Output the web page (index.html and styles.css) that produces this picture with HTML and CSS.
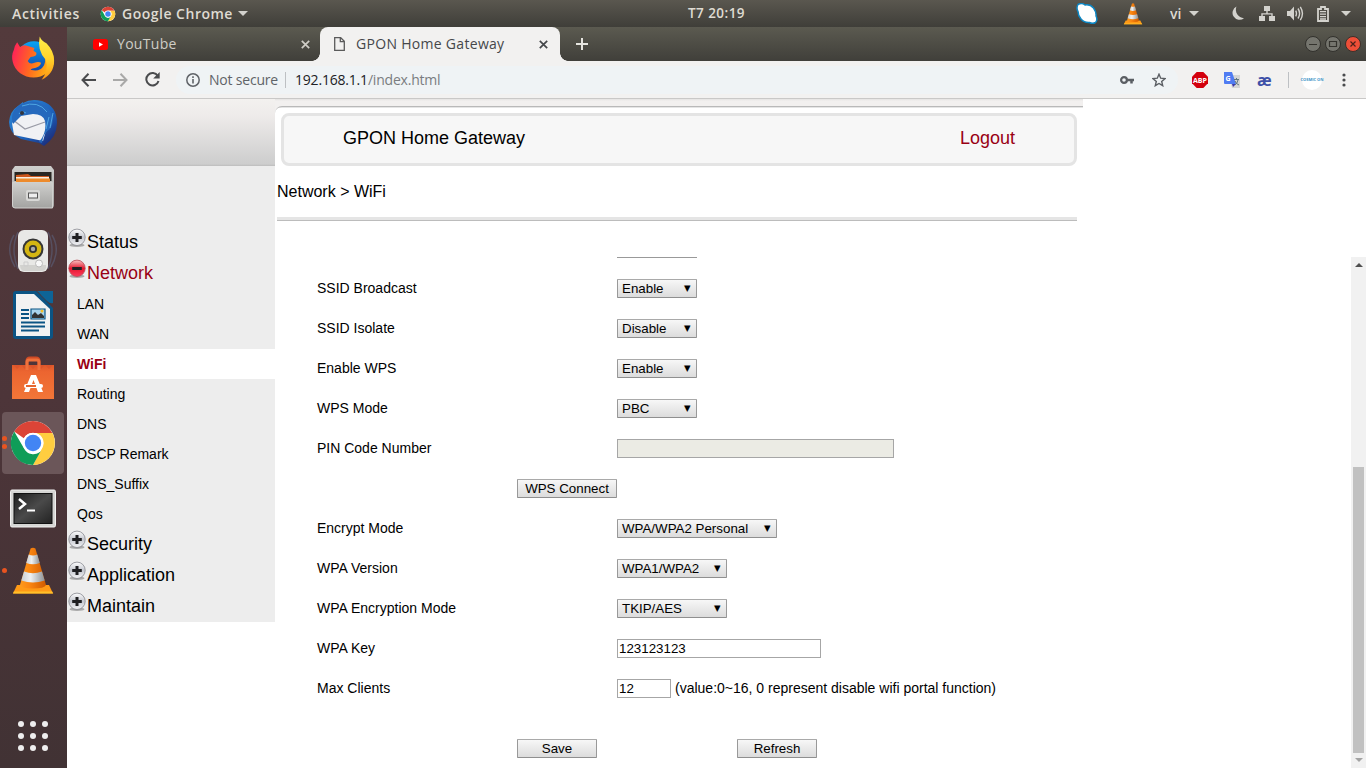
FILE: index.html
```html
<!DOCTYPE html>
<html lang="en">
<head>
<meta charset="utf-8">
<title>GPON Home Gateway</title>
<link rel="stylesheet" href="styles.css">
</head>
<body>
<svg width="0" height="0" class="defs">
  <defs>
    <linearGradient id="silver" x1="0" y1="0" x2="0" y2="1"><stop offset="0" stop-color="#fff"/><stop offset=".5" stop-color="#c3c6ce"/><stop offset="1" stop-color="#f4f4f6"/></linearGradient>
    <linearGradient id="red" x1="0" y1="0" x2="0" y2="1"><stop offset="0" stop-color="#f9c4c4"/><stop offset=".5" stop-color="#e2192f"/><stop offset="1" stop-color="#ff3b5d"/></linearGradient>
    <linearGradient id="fox" x1="0" y1=".2" x2="1" y2=".4"><stop offset="0" stop-color="#ff1f5b"/><stop offset=".5" stop-color="#ff6a1f"/><stop offset="1" stop-color="#ffbd12"/></linearGradient>
    <linearGradient id="flame" x1="0" y1="0" x2="0" y2="1"><stop offset="0" stop-color="#fff04a"/><stop offset=".5" stop-color="#ffd42c"/><stop offset="1" stop-color="#ff9412"/></linearGradient>
    <linearGradient id="globe" x1="0" y1="0" x2="0" y2="1"><stop offset="0" stop-color="#0aa4f5"/><stop offset="1" stop-color="#14389e"/></linearGradient>
    <linearGradient id="bird" x1="0" y1="0" x2="1" y2="1"><stop offset="0" stop-color="#2e8fdc"/><stop offset=".6" stop-color="#1d5fb8"/><stop offset="1" stop-color="#1b1c66"/></linearGradient>
    <linearGradient id="metal" x1="0" y1="0" x2="0" y2="1"><stop offset="0" stop-color="#cfcfcd"/><stop offset="1" stop-color="#a3a3a1"/></linearGradient>
    <linearGradient id="bag" x1="0" y1="0" x2="0" y2="1"><stop offset="0" stop-color="#e0592b"/><stop offset=".2" stop-color="#ec6530"/><stop offset="1" stop-color="#f27638"/></linearGradient>
    <linearGradient id="screen" x1="0" y1="0" x2="1" y2="1"><stop offset="0" stop-color="#1e1e1e"/><stop offset=".5" stop-color="#4a4a4a"/><stop offset="1" stop-color="#222"/></linearGradient>
    <linearGradient id="cone" x1="0" y1="0" x2="1" y2="0"><stop offset="0" stop-color="#ff9a1c"/><stop offset=".4" stop-color="#f98410"/><stop offset="1" stop-color="#cf5a00"/></linearGradient>
    <linearGradient id="stripe" x1="0" y1="0" x2="1" y2="0"><stop offset="0" stop-color="#c9ced2"/><stop offset=".4" stop-color="#eef0f1"/><stop offset="1" stop-color="#8d9296"/></linearGradient>
    <symbol id="chrome" viewBox="0 0 48 48">
      <circle cx="24" cy="24" r="22" fill="#fff"/>
      <path d="M24 2a22 22 0 0 1 19.400 12L24 14a10.500 10.500 0 0 0-9.200 5.300L5.200 12.600A22 22 0 0 1 24 2Z" fill="#db4437"/>
      <path d="M43.400 14A22 22 0 0 1 24 46l9-16.400A10.500 10.500 0 0 0 27 14Z" fill="#ffcd40"/>
      <path d="M5.200 12.400l9.700 16.900a10.500 10.500 0 0 0 16.800 3L24 46A22 22 0 0 1 5.200 12.400Z" fill="#0f9d58"/>
      <circle cx="24" cy="24" r="10.300" fill="#fff"/><circle cx="24" cy="24" r="8.200" fill="#4285f4"/>
    </symbol>
    <symbol id="vlc" viewBox="0 0 48 48">
      <path d="M8 38h32l4 8.500H4Z" fill="#ff9a16"/><path d="M4.800 44.500h38.400l1 2H4Z" fill="#ffc02a"/>
      <path d="M21.600 1.500q2.400-1.500 4.800 0L37 38q-1.500 3.500-13 3.500T11 38Z" fill="url(#cone)"/>
      <path d="M19.700 7.500q4.300 1.800 8.600 0l2.500 8.500q-6.800 2.500-13.600 0Z" fill="url(#stripe)"/>
      <path d="M15 24.500q9 3.500 18 0l2.700 9q-11.700 4-23.400 0Z" fill="url(#stripe)"/>
    </symbol>
    <symbol id="plus" viewBox="0 0 18 19"><ellipse cx="9" cy="17.300" rx="7.500" ry="1.700" fill="#aaa"/><circle cx="9" cy="9.300" r="8.200" fill="url(#silver)" stroke="#85878e" stroke-width=".8"/><path d="M7.500 5h3v3h3.300v3h-3.300v3h-3v-3H4.200V8h3.300Z" fill="#1f1f22"/></symbol>
    <symbol id="minus" viewBox="0 0 18 19"><ellipse cx="9" cy="17.300" rx="7.500" ry="1.700" fill="#aaa"/><circle cx="9" cy="9.300" r="8.200" fill="url(#red)" stroke="#b84a55" stroke-width=".8"/><path d="M4.200 8h9.600v3H4.200Z" fill="#1f1f22"/></symbol>
    <symbol id="close" viewBox="0 0 9 9"><path d="M.8.800l7.400 7.400M8.200.800L.8 8.200" stroke="currentColor" stroke-width="1.700"/></symbol>
  </defs>
</svg>

<header class="panel">
  <div class="panel-left">
    <span class="activities">Activities</span>
    <svg class="panel-chrome" width="16" height="16"><use href="#chrome"/></svg>
    <span class="app-name">Google Chrome</span>
    <i class="caret"></i>
  </div>
  <span class="clock">T7 20:19</span>
  <div class="panel-right">
    <svg width="22" height="22" viewBox="0 0 22 22"><path d="M2 1.500Q6-.5 9 2q5-1 8.500 3 3 4 2.500 8 2 4-.5 6.500-3 1.500-6 0-5 .5-8.500-3.500-3-3.500-3-7.500Q0 5 2 1.500Z" fill="#fff" stroke="#0d87c4" stroke-width="1.500"/></svg>
    <svg class="tray-vlc" width="22" height="22"><use href="#vlc"/></svg>
    <span class="lang">vi</span><i class="caret"></i>
    <svg class="moon" width="14" height="15" viewBox="0 0 14 15"><path d="M5.500.500A8.500 8.500 0 0 0 13 12.200 7 7 0 1 1 5.500.500Z" fill="#d3d2cd"/></svg>
    <svg class="net" width="16" height="15" viewBox="0 0 16 15" fill="#d3d2cd"><path d="M5 0h6v5H8.700v2.200h5V10H16v5h-6v-5h2.300V8.600H3.700V10H6v5H0v-5h2.300V7.200h5V5H5Z"/></svg>
    <svg class="sound" width="17" height="15" viewBox="0 0 17 15"><path d="M0 5h3l4-4.500v14L3 10H0Z" fill="#d3d2cd"/><path d="M8.700 4.700q1.500 2.800 0 5.600M11 2.500q3.200 5 0 10M13.300.800q4.300 6.700 0 13.400" fill="none" stroke="#d3d2cd" stroke-width="1.400"/></svg>
    <svg class="battery" width="12" height="16" viewBox="0 0 12 16"><path d="M4 1h4v2h3v12H1V3h3Z" fill="none" stroke="#d3d2cd" stroke-width="1.800"/><path d="M3 5.700h6M3 8.200h6M3 10.700h6M3 13h6" stroke="#d3d2cd" stroke-width="1.300"/></svg>
    <i class="caret"></i>
  </div>
</header>

<div class="desktop">
  <nav class="dock">
    <div class="tile"><svg width="48" height="48" viewBox="-1 -1.500 50 50"><circle cx="25" cy="23" r="18" fill="url(#globe)"/><path d="M4 14q1-5 3.500-8l3 5q4-3 8-1l7 2-1 3 3 2q1 4-6 4.500l-3 4q2 4 7 2 4-2 7 0-1 5-9 6-3 1-1 1.500 9 2 13-5 3-7-1-15V8Q46 16 46 27A22 20 0 0 1 3 27Q1 20 4 14Z" fill="url(#fox)"/><path d="M31 0q2 5 7 7 8 8 8 18 0 14-13 20 8-10 4-21Q28 14 31 0Z" fill="url(#flame)"/></svg></div>
    <div class="tile"><svg width="48" height="48" viewBox="0 0 48 48"><path d="M14 4q8-5 19-2 15 5 15 22 0 14-13 23l-5-3-18-4Q0 34 0 23 1 12 9 7l5-4Z" fill="url(#bird)"/><path d="M3 24l11-9 22-1q3 2 4 7l-6 21L5 36Z" fill="#f0f1f4"/><path d="M4 21l12 9 20-7" fill="none" stroke="#999ba6" stroke-width="1.300"/><path d="M12 5Q28-2 40 10q7 11 1 20-7 4-8 14l-3-1q8-9 6-21-2-7-12-7l-12 2-8 8Q0 12 12 5Z" fill="#2569bd"/><path d="M13 7q16-6 25 6M40 18l-3 12m7-16-3 15M10 15q2-4 7-1" fill="none" stroke="#4fa6e2"/><circle cx="13" cy="14" r="2" fill="#31343d"/></svg></div>
    <div class="tile"><svg width="48" height="48" viewBox="0 0 48 48"><path d="M6 3h36l3 4v35q0 3-3 3H6q-3 0-3-3V7Z" fill="url(#metal)"/><path d="M5.500 9h37v9h-37Z" fill="#292622"/><path d="M7 12l12-1 3 2h18v8H7Z" fill="#cc561c"/><path d="M7 14h33v4H7Z" fill="#f7eee3"/><path d="M7 15.500h34V20H7Z" fill="#ed8b2d"/><path d="M3.500 19.500h40V45H6q-2.500 0-2.500-3Z" fill="url(#metal)" stroke="#d0d0ce"/><rect x="17" y="27" width="14" height="11" rx="2" fill="#d8d8d6"/><rect x="19.500" y="30" width="9" height="5" fill="#eee" stroke="#555"/></svg></div>
    <div class="tile"><svg width="48" height="48" viewBox="0 0 48 48"><path d="M5 8q-9 15 1 32M9 5q-8 17 0 37M43 8q9 15-1 32M39 5q8 17 0 37" fill="none" stroke="#5d6885" stroke-width="1.500" opacity=".5"/><rect x="9" y="3" width="30" height="42" rx="6" fill="#e8e8e6"/><path d="M11 38h26q1 6-5 6H16q-5 0-5-6" fill="#d2d2cf"/><circle cx="24" cy="22" r="10.500" fill="#353535"/><circle cx="24" cy="22" r="8.500" fill="#d4b512"/><circle cx="24" cy="22" r="4" fill="#333"/><circle cx="24" cy="22" r="2.200" fill="#aaa"/><circle cx="30" cy="36.500" r="3.500" fill="#f8f8f8" stroke="#bbb"/><path d="M15 35h4v4h-4Z" fill="none" stroke="#ccc"/></svg></div>
    <div class="tile"><svg width="48" height="48" viewBox="0 0 48 48"><path d="M7 0h20l17 17v28q0 3-3 3H7q-3 0-3-3V3q0-3 3-3Z" fill="#0b5484"/><path d="M7 3h18l16 15v27H7Z" fill="#f2f2f2"/><path d="M28 0h16v12Q41 13 38 10L32 4q-2-3-4-4Z" fill="#0e6497"/><path d="M12 19h8M12 23h8M12 27h8M12 31.500h24M12 35.500h24M12 39.500h18" stroke="#0b5484" stroke-width="2"/><path d="M22 18h14v10H22Z" fill="#a9d4ed" stroke="#0b5484" stroke-width="1.200"/><path d="M23 27v-3l3-3 3 3 3-2 3 3v2Z" fill="#333"/><circle cx="33" cy="20" r="1.500" fill="#f4bc26"/></svg></div>
    <div class="tile"><svg width="48" height="48" viewBox="0 0 48 48"><path d="M18 14V6q0-3 3-3h6q3 0 3 3v8" fill="none" stroke="#cf4b25" stroke-width="3"/><path d="M3 10h42v34H3Z" fill="url(#bag)"/><path d="M5 10l3 4 4-4 4 4 4-4 4 4 4-4 4 4 4-4 4 4 4-4Z" fill="#dc552b"/><path d="M18 15V7q0-2 2-2h8q2 0 2 2v8" fill="none" stroke="#ef713c" stroke-width="3"/><path d="M22 20h5l7 17h-5l-4.500-12L20 37h-5Z" fill="#fff"/><rect x="15" y="29" width="19" height="4" rx="2" fill="#fff"/><path d="M17 31h10" stroke="#e56732" stroke-width="2"/></svg></div>
    <div class="tile active two"><svg width="48" height="48"><use href="#chrome"/></svg></div>
    <div class="tile terminal"><svg width="48" height="48" viewBox="0 0 48 48"><rect x="1.500" y="6" width="45" height="37" rx="1.500" fill="#d6d6d4" stroke="#f1f1f0"/><rect x="5" y="9.500" width="38" height="30" fill="url(#screen)" stroke="#111"/><path d="M10 15l6 5-6 5" fill="none" stroke="#fff" stroke-width="2.500"/><path d="M18 26.500h8" stroke="#fff" stroke-width="2"/></svg></div>
    <div class="tile one"><svg width="48" height="48"><use href="#vlc"/></svg></div>
    <div class="tile apps"><svg width="32" height="32" viewBox="0 0 32 32" fill="#eee"><circle cx="4" cy="4" r="3"/><circle cx="16" cy="4" r="3"/><circle cx="28" cy="4" r="3"/><circle cx="4" cy="16" r="3"/><circle cx="16" cy="16" r="3"/><circle cx="28" cy="16" r="3"/><circle cx="4" cy="28" r="3"/><circle cx="16" cy="28" r="3"/><circle cx="28" cy="28" r="3"/></svg></div>
  </nav>

  <main class="browser">
    <div class="tabs">
      <div class="tab idle">
        <svg width="15" height="11" viewBox="0 0 15 11"><rect width="15" height="11" rx="2.500" fill="#f00"/><path d="M6 3.200v4.600l4-2.300Z" fill="#fff"/></svg>
        <span class="tab-title youtube">YouTube</span>
        <svg class="x" width="9" height="9"><use href="#close"/></svg>
      </div>
      <div class="tab current">
        <svg width="11" height="14" viewBox="0 0 11 14"><path d="M.7.700h6l3.600 3.600v9H.700ZM6.300.700v4h4" fill="none" stroke="#5a5a5a" stroke-width="1.300"/></svg>
        <span class="tab-title gpon">GPON Home Gateway</span>
        <svg class="x" width="9" height="9"><use href="#close"/></svg>
      </div>
      <svg class="new-tab" width="12" height="12" viewBox="0 0 12 12"><path d="M6 0v12M0 6h12" stroke="#e6e5e0" stroke-width="2"/></svg>
      <div class="win-buttons">
        <svg width="16" height="16" viewBox="0 0 16 16"><circle cx="8" cy="8" r="7.500" fill="#75756e" stroke="#32312d"/><path d="M4 8.500h8" stroke="#34332e"/></svg>
        <svg width="16" height="16" viewBox="0 0 16 16"><circle cx="8" cy="8" r="7.500" fill="#75756e" stroke="#32312d"/><path d="M4.500 5.500h7v5h-7Z" fill="none" stroke="#34332e" stroke-width="1.200"/></svg>
        <svg width="16" height="16" viewBox="0 0 16 16"><circle cx="8" cy="8" r="7.500" fill="#ee4f38" stroke="#3b302b"/><path d="M5.500 5.500l5 5M10.500 5.500l-5 5" stroke="#4c211a" stroke-width="1.200"/></svg>
      </div>
    </div>

    <div class="toolbar">
      <svg width="15" height="14" viewBox="0 0 15 14"><path d="M7.500.700L1.500 7l6 6.300M1.500 7H15" fill="none" stroke="#4a4b4d" stroke-width="2"/></svg>
      <svg class="fwd" width="15" height="14" viewBox="0 0 15 14"><path d="M7.500.700l6 6.300-6 6.300M13.500 7H0" fill="none" stroke="#a9a9a8" stroke-width="2"/></svg>
      <svg class="reload" width="15" height="15" viewBox="0 0 15 15"><path d="M12.800 4A6.200 6.200 0 1 0 13.500 9" fill="none" stroke="#4a4b4d" stroke-width="2"/><path d="M14.700 0v6.500H8.200Z" fill="#4a4b4d"/></svg>
      <div class="omnibox">
        <svg width="14" height="14" viewBox="0 0 14 14"><circle cx="7" cy="7" r="6.200" fill="none" stroke="#5f6368" stroke-width="1.500"/><path d="M7 6v4.500M7 3.300v1.600" stroke="#5f6368" stroke-width="1.600"/></svg>
        <span class="secure">Not secure</span>
        <i class="sep"></i>
        <span class="url"><b>192.168.1.1</b>/index.html</span>
        <svg class="key" width="14" height="8" viewBox="0 0 14 8"><circle cx="4" cy="4" r="2.900" fill="none" stroke="#5a5e63" stroke-width="2.200"/><path d="M7 4h7M11.500 4v3.500" stroke="#5a5e63" stroke-width="2.500"/></svg>
        <svg class="star" width="14" height="14" viewBox="0 0 14 14"><path d="M7 1.200l1.700 4 4.300.4-3.300 2.900 1 4.200L7 10.500l-3.700 2.200 1-4.200L1 5.600l4.300-.4Z" fill="none" stroke="#5a5e63" stroke-width="1.400"/></svg>
      </div>
      <div class="extensions">
        <svg width="16" height="16" viewBox="0 0 16 16"><path d="M4.700 0h6.600L16 4.700v6.600L11.300 16H4.700L0 11.300V4.700Z" fill="#d3000d"/><text class="abp" x="1" y="10.900" textLength="14" lengthAdjust="spacingAndGlyphs">ABP</text></svg>
        <svg class="translate" width="16" height="16" viewBox="0 0 16 16"><path d="M5 3h11v13H8Z" fill="#d5d5d5"/><path d="M0 0h8l4 12H1q-1 0-1-1Z" fill="#507cf2"/><path d="M8 12h4l-3 3Z" fill="#4039a5"/><path d="M10 7.500h5M12.500 6v1.500M14 8q-1 4-3 5m0-4q1 3 4 4" fill="none" stroke="#60757f"/><text class="g" x="1.500" y="9">G</text></svg>
        <span class="ae">æ</span>
        <i class="sep"></i>
        <span class="avatar"><span>COSMIC ON</span></span>
        <svg class="menu" width="4" height="14" viewBox="0 0 4 14" fill="#4a4b4d"><circle cx="2" cy="2" r="1.600"/><circle cx="2" cy="7" r="1.600"/><circle cx="2" cy="12" r="1.600"/></svg>
      </div>
    </div>

    <div class="page">
      <aside class="sidebar">
        <div class="side-top"></div>
        <ul class="side-menu">
          <li class="group"><svg width="18" height="19"><use href="#plus"/></svg>Status</li>
          <li class="group open"><svg width="18" height="19"><use href="#minus"/></svg>Network</li>
          <li class="item">LAN</li><li class="item">WAN</li><li class="item selected">WiFi</li><li class="item">Routing</li><li class="item">DNS</li><li class="item">DSCP Remark</li><li class="item">DNS_Suffix</li><li class="item">Qos</li>
          <li class="group"><svg width="18" height="19"><use href="#plus"/></svg>Security</li>
          <li class="group"><svg width="18" height="19"><use href="#plus"/></svg>Application</li>
          <li class="group"><svg width="18" height="19"><use href="#plus"/></svg>Maintain</li>
        </ul>
      </aside>
      <section class="content">
        <div class="top-band"><div class="top-edge"></div></div>
        <div class="title-box"><span>GPON Home Gateway</span><a>Logout</a></div>
        <div class="crumb">Network &gt; WiFi</div>
        <div class="frame">
          <div class="form">
            <div class="cut"></div>
            <div class="row"><label>SSID Broadcast</label><div class="select w80">Enable<i>▼</i></div></div>
            <div class="row"><label>SSID Isolate</label><div class="select w80">Disable<i>▼</i></div></div>
            <div class="row"><label>Enable WPS</label><div class="select w80">Enable<i>▼</i></div></div>
            <div class="row"><label>WPS Mode</label><div class="select w80">PBC<i>▼</i></div></div>
            <div class="row"><label>PIN Code Number</label><div class="input pin"></div></div>
            <div class="row connect"><div class="button w100">WPS Connect</div></div>
            <div class="row"><label>Encrypt Mode</label><div class="select w160">WPA/WPA2 Personal<i>▼</i></div></div>
            <div class="row"><label>WPA Version</label><div class="select w110">WPA1/WPA2<i>▼</i></div></div>
            <div class="row"><label>WPA Encryption Mode</label><div class="select w110">TKIP/AES<i>▼</i></div></div>
            <div class="row"><label>WPA Key</label><div class="input key-input">123123123</div></div>
            <div class="row"><label>Max Clients</label><div class="input clients">12</div><span class="hint">(value:0~16, 0 represent disable wifi portal function)</span></div>
            <div class="row actions"><div class="button w80">Save</div><div class="button w80">Refresh</div></div>
          </div>
          <div class="scrollbar"><i class="up"></i><div class="thumb"></div><i class="down"></i></div>
        </div>
      </section>
    </div>
  </main>
</div>
</body>
</html>
```
FILE: styles.css
```css
* { box-sizing: border-box; }
body { margin: 0; width: 1366px; height: 768px; overflow: hidden; background: #fff; font-family: "Liberation Sans", Arial, sans-serif; color: #000; }
svg { display: block; flex: none; }
.defs { position: absolute; }
i { font-style: normal; }

.panel { height: 27px; display: grid; grid-template-columns: 688px 1fr auto; align-items: center; background: linear-gradient(#5a574f, #3f3e39); color: #dfdbd2; font: 600 14px/27px "Open Sans", "Noto Sans", sans-serif; white-space: nowrap; }
.panel-left, .panel-right { display: flex; align-items: center; height: 27px; }
.panel-left { padding-left: 12px; }
.activities { width: 88px; letter-spacing: .65px; }
.app-name { width: 116px; margin-left: 6px; letter-spacing: .5px; }
.caret { flex: none; border: 5px solid transparent; border-top-color: #d3d2cd; border-bottom: 0; }
.clock { font-size: 13.5px; letter-spacing: .45px; }
.panel-right { padding-right: 15px; }
.tray-vlc { margin-left: 24px; }
.lang { width: 19px; margin-left: 26px; }
.moon { margin-left: 32px; }
.net { margin-left: 14px; }
.sound { margin-left: 12px; }
.battery { margin: 0 12px 0 13px; }

.desktop { display: flex; height: 741px; }
.dock { width: 67px; flex: none; display: flex; flex-direction: column; background: linear-gradient(#533a3c, #4d3539 50%, #413234); }
.tile { width: 66px; height: 64px; display: flex; align-items: center; justify-content: center; }
.active { width: 62px; height: 62px; margin: 1px 2px; border-radius: 4px; background: #6b5659; }
.terminal { padding-top: 2px; }
.two, .one { position: relative; }
.two::before, .one::before { content: ""; position: absolute; left: 0; top: 24px; width: 5px; height: 5px; border-radius: 50%; background: #e95420; box-shadow: 0 8px #e95420; }
.one::before { left: 2px; top: 29px; box-shadow: none; }
.apps { margin-top: auto; }

.browser { flex: 1; min-width: 0; display: flex; flex-direction: column; }
.tabs { height: 34px; display: flex; align-items: center; background: linear-gradient(#5b5a50, #403f3a); font: 14px/34px "Open Sans", "Noto Sans", sans-serif; white-space: nowrap; }
.tab { height: 34px; display: flex; align-items: center; }
.idle { width: 253px; padding: 0 10px 0 26px; color: #cfcdc6; }
.current { width: 240px; padding: 0 12px 0 14px; border-radius: 8px 8px 0 0; background: #f2f1f0; color: #45474a; position: relative; }
.current::before, .current::after { content: ""; position: absolute; bottom: 0; width: 8px; height: 8px; background: radial-gradient(circle at 0 0, transparent 7.5px, #f2f1f0 8px); }
.current::before { left: -8px; }
.current::after { right: -8px; transform: scaleX(-1); }
.tab-title { margin-left: 9px; letter-spacing: .3px; }
.gpon { margin-left: 11px; }
.x { margin-left: auto; }
.new-tab { margin-left: 16px; }
.win-buttons { display: flex; gap: 4px; margin: 0 5px 0 auto; }

.toolbar { height: 38px; padding: 0 20px 0 14px; display: flex; align-items: center; background: #f2f1f0; border-bottom: 1px solid #c9c8c7; font: 14px/28px "Open Sans", "Noto Sans", sans-serif; white-space: nowrap; }
.fwd { margin-left: 17px; }
.reload { margin-left: 17px; }
.omnibox { width: 1002px; height: 28px; margin-left: 16px; padding: 0 12px 0 10px; display: flex; align-items: center; border-radius: 14px; background: #eff3f5; color: #5f6368; }
.secure { width: 76px; margin-left: 9px; letter-spacing: -.2px; }
.sep { width: 1px; height: 16px; background: #bdc0c3; }
.url { margin-left: 9px; color: #7a7d80; letter-spacing: -.2px; }
.url b { font-weight: 400; color: #202124; }
.key { margin-left: auto; }
.star { margin-left: 18px; }
.extensions { display: flex; align-items: center; margin-left: auto; }
.abp { font: bold 7.5px "Open Sans", sans-serif; fill: #fff; }
.g { font: bold 7px "Open Sans", sans-serif; fill: #fff; }
.translate { margin-left: 16px; }
.ae { width: 15px; margin: 0 16px 0 17px; color: #3f51a8; font-weight: 700; font-size: 16px; letter-spacing: -1px; }
.avatar { width: 20px; height: 20px; margin-left: 13px; border-radius: 50%; background: #fff; display: flex; align-items: center; justify-content: center; }
.avatar span { font-size: 4px; font-weight: 700; color: #3d94c8; line-height: 20px; }
.menu { margin-left: 20px; }

.page { flex: 1; min-height: 0; display: flex; }
.sidebar { width: 208px; flex: none; }
.side-top { height: 67px; background: linear-gradient(#f3f1ef, #eeebea 25%, #d0d0d0 90%, #cecece 97%, #bdbdbd); }
.side-menu { list-style: none; margin: 0; padding: 61px 0 0; background: #ededed; }
.group { height: 31px; padding-left: 1px; display: flex; font-size: 18px; line-height: 31px; }
.group svg { margin-top: 1px; margin-right: 1px; }
.open { color: #990014; }
.item { height: 30px; padding-left: 10px; font-size: 14px; line-height: 30px; }
.selected { background: #fff; color: #990014; font-weight: 700; }

.content { flex: 1; min-width: 0; display: flex; flex-direction: column; background: #fff; }
.top-band { width: 808px; height: 14px; padding-top: 7px; background: linear-gradient(#e4e3e2, #f2f0ef 2px, #f2f0ef 11px, #fff 11px); }
.top-edge { height: 7px; border-top: 1px solid #b9b9b9; border-radius: 8px 0 0 0; background: linear-gradient(#e5e5e5 1px, #fff 1px); }
.title-box { width: 796px; height: 53px; margin-left: 6px; padding: 0 59px; display: flex; justify-content: space-between; border: 3px solid #e4e4e4; border-radius: 8px; background: #f7f7f7; font-size: 18px; line-height: 45px; }
.title-box a { color: #990014; }
.crumb { width: 800px; height: 55px; margin-left: 2px; font-size: 16px; line-height: 51px; border-bottom: 1px solid #bcbcbc; box-shadow: inset 0 -3px #e5e5e5; }
.frame { flex: 1; min-height: 0; margin-top: 36px; display: flex; }
.form { flex: 1; padding-left: 42px; font-size: 14px; }
.cut { width: 80px; height: 1px; margin: 0 0 10px 300px; background: #999; }
.row { height: 40px; display: flex; align-items: center; }
.row label { width: 300px; }
.select, .input, .button { height: 19px; margin-top: 1px; border: 1px solid #a6a6a6; font-size: 13.333px; line-height: 18px; }
.select, .button { border-color: #a9a9a9 #999 #8f8f8f; border-radius: 1px; background: linear-gradient(#f7f7f7, #dcdcdc); }
.select { padding: 0 4px; display: flex; justify-content: space-between; }
.select i { width: 8px; font-family: "DejaVu Sans", sans-serif; font-size: 8.5px; line-height: 16px; }
.button { text-align: center; line-height: 17px; }
.input { padding-left: 1px; background: #fff; }
.pin { width: 277px; background: #ebebe4; }
.key-input { width: 204px; }
.clients { width: 54px; }
.hint { margin-left: 4px; }
.w80 { width: 80px; }
.w100 { width: 100px; }
.w110 { width: 110px; }
.w160 { width: 160px; }
.connect { padding-left: 200px; }
.actions { margin-top: 20px; padding-left: 200px; gap: 140px; }
.scrollbar { width: 15px; display: flex; flex-direction: column; align-items: center; background: #f1f1f1; }
.up { margin-top: 6px; border: 4px solid transparent; border-bottom-color: #505050; border-top: 0; }
.thumb { width: 11px; height: 286px; margin-top: 200px; background: #c1c1c1; }
.down { margin-top: 5px; border: 4px solid transparent; border-top-color: #a3a3a3; border-bottom: 0; }
```
